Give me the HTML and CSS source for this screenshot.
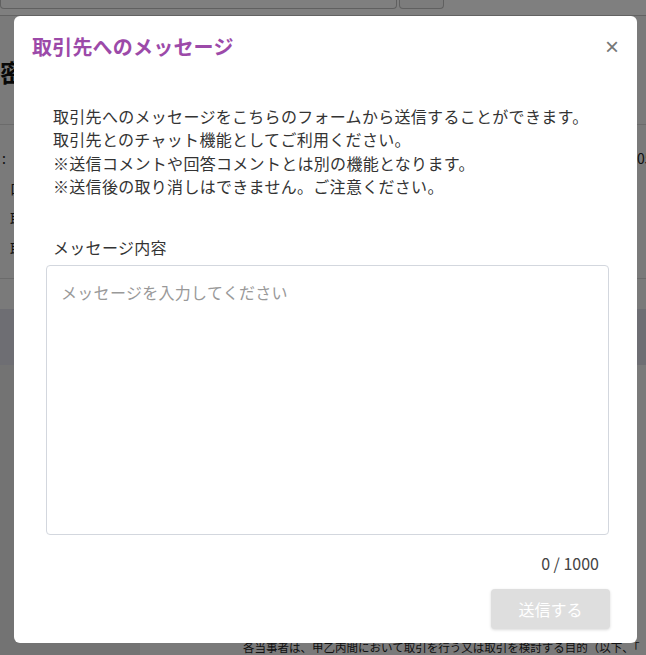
FILE: index.html
```html
<!DOCTYPE html>
<html lang="ja">
<head>
<meta charset="utf-8">
<title>取引先へのメッセージ</title>
<link rel="stylesheet" href="styles.css">
</head>
<body>
<div class="page">
  <header class="topbar">
    <div class="search"></div>
    <div class="search-btn"></div>
  </header>
  <main class="main">
    <h1 class="doc-title">密</h1>
    <section class="info">
      <div class="info-row first"><span class="colon">:</span><span class="date">05</span></div>
      <div class="info-row"><span class="cell">口</span></div>
      <div class="info-row"><span class="cell">取</span></div>
      <div class="info-row"><span class="cell">取</span></div>
    </section>
    <div class="band"></div>
    <div class="lower">
      <aside class="side"></aside>
      <div class="doc">
        <p class="doc-text">各当事者は、甲乙丙間において取引を行う又は取引を検討する目的（以下、「</p>
      </div>
    </div>
  </main>
</div>

<div class="overlay">
  <div class="modal" role="dialog">
    <div class="modal-header">
      <h2 class="modal-title">取引先へのメッセージ</h2>
      <span class="close">×</span>
    </div>
    <div class="modal-body">
      <p class="intro">取引先へのメッセージをこちらのフォームから送信することができます。<br>取引先とのチャット機能としてご利用ください。<br>※送信コメントや回答コメントとは別の機能となります。<br>※送信後の取り消しはできません。ご注意ください。</p>
      <label class="label" for="msg">メッセージ内容</label>
      <textarea id="msg" class="textarea" placeholder="メッセージを入力してください"></textarea>
      <div class="counter">0 / 1000</div>
      <div class="footer">
        <button class="send" disabled>送信する</button>
      </div>
    </div>
  </div>
</div>
</body>
</html>
```

FILE: styles.css
```css
html, body {
  margin: 0;
  padding: 0;
}
body {
  font-family: "Noto Sans CJK JP", "Noto Sans", sans-serif;
  background: #f4f4f4;
  width: 646px;
  height: 655px;
  overflow: hidden;
}
.page {
  width: 646px;
}
.topbar {
  height: 15px;
  background: #fefefe;
  border-bottom: 1px solid #c4c4c4;
  display: flex;
  align-items: flex-start;
  gap: 2px;
}
.search {
  width: 397px;
  height: 9px;
  border: 1px solid #c0c0c0;
  border-top: none;
  border-radius: 0 0 4px 4px;
  box-sizing: border-box;
  background: #fefefe;
}
.search-btn {
  width: 45px;
  height: 9px;
  border: 1px solid #c0c0c0;
  border-top: none;
  border-radius: 0 0 4px 4px;
  box-sizing: border-box;
  background: #f8f8f8;
}
.main {
  background: #f4f4f4;
}
.doc-title {
  margin: 0;
  padding-top: 44px;
  font-size: 24px;
  line-height: 24px;
  font-weight: 700;
  color: #111;
  white-space: nowrap;
}
.info {
  margin-top: 40px;
  height: 155px;
  border-top: 1px solid #d6d6d6;
  border-bottom: 1px solid #d6d6d6;
  box-sizing: border-box;
  padding-top: 22px;
  display: flex;
  flex-direction: column;
  gap: 8px;
}
.info-row {
  display: flex;
  justify-content: space-between;
  font-size: 14px;
  line-height: 22px;
  color: #222;
  padding-left: 10px;
}
.info-row.first {
  padding-left: 2px;
}
.date {
  width: 9px;
  overflow: hidden;
  white-space: nowrap;
}
.band {
  margin-top: 30px;
  height: 56px;
  background: #dcdce6;
}
.lower {
  display: flex;
  height: 300px;
}
.side {
  width: 140px;
  background: #e6e6e6;
}
.doc {
  flex: 1;
  padding-left: 103px;
  padding-top: 275px;
  overflow: hidden;
}
.doc-text {
  margin: 0;
  font-size: 11.5px;
  line-height: 14px;
  color: #222;
  white-space: nowrap;
}

/* overlay + modal */
.overlay {
  position: fixed;
  inset: 0;
  background: rgba(0, 0, 0, 0.5);
  display: flex;
  align-items: flex-start;
  justify-content: flex-start;
  padding: 16px 0 0 14px;
}
.modal {
  width: 623px;
  height: 627px;
  background: #fff;
  border-radius: 6px;
  box-sizing: border-box;
  display: flex;
  flex-direction: column;
}
.modal-header {
  display: flex;
  justify-content: space-between;
  align-items: center;
  padding: 20px 18px 0 18px;
}
.modal-title {
  margin: 0;
  font-size: 20px;
  line-height: 22px;
  font-weight: 700;
  color: #9c4aa9;
  letter-spacing: 0.2px;
}
.close {
  font-family: "Liberation Sans", "DejaVu Sans", sans-serif;
  font-size: 24px;
  line-height: 22px;
  color: #777;
  cursor: pointer;
}
.modal-body {
  padding: 47px 28px 0 32px;
  display: flex;
  flex-direction: column;
}
.intro {
  margin: 0;
  padding-left: 7px;
  font-size: 16px;
  line-height: 23.4px;
  color: #333;
  letter-spacing: 0.3px;
}
.label {
  margin-top: 36px;
  padding-left: 7px;
  font-size: 16px;
  line-height: 24px;
  color: #333;
  letter-spacing: 0.3px;
}
.textarea {
  margin-top: 6px;
  width: 100%;
  height: 270px;
  box-sizing: border-box;
  border: 1px solid #d3d7de;
  border-radius: 4px;
  padding: 14px 14px;
  font-family: "Noto Sans CJK JP", "Noto Sans", sans-serif;
  font-size: 16px;
  line-height: 24px;
  color: #333;
  letter-spacing: 0.3px;
  resize: none;
  outline: none;
}
.textarea::placeholder {
  color: #999;
}
.counter {
  margin-top: 18px;
  text-align: right;
  padding-right: 10px;
  font-size: 16px;
  line-height: 20px;
  color: #444;
}
.footer {
  margin-top: 16px;
  display: flex;
  justify-content: flex-end;
  margin-right: -1px;
}
.send {
  width: 119px;
  height: 40px;
  border: none;
  border-radius: 4px;
  background: #dedede;
  color: #fff;
  font-family: "Noto Sans CJK JP", "Noto Sans", sans-serif;
  font-size: 16px;
  box-shadow: 0 1px 3px rgba(0, 0, 0, 0.15);
}
```
